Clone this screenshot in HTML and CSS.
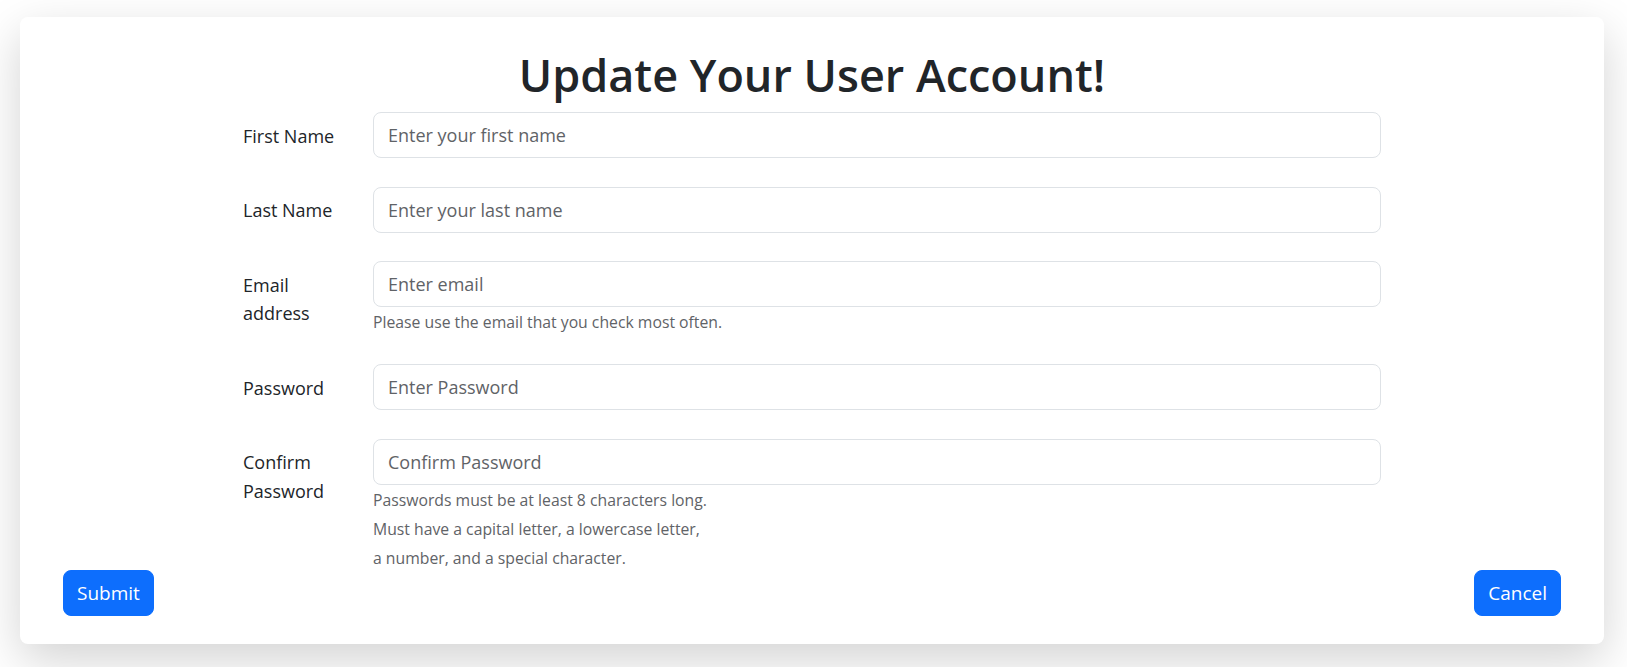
FILE: index.html
```html
<!DOCTYPE html>
<html lang="en">
<head>
<meta charset="utf-8">
<title>Update Your User Account!</title>
<link rel="stylesheet" href="styles.css">
</head>
<body>
<div class="page">
  <div class="card">
    <h1 class="title">Update Your User Account!</h1>
    <form class="form">
      <div class="row">
        <label class="label" for="first">First Name</label>
        <div class="field">
          <input class="input" id="first" type="text" placeholder="Enter your first name">
        </div>
      </div>
      <div class="row">
        <label class="label" for="last">Last Name</label>
        <div class="field">
          <input class="input" id="last" type="text" placeholder="Enter your last name">
        </div>
      </div>
      <div class="row row-help">
        <label class="label" for="email">Email address</label>
        <div class="field">
          <input class="input" id="email" type="email" placeholder="Enter email">
          <div class="help">Please use the email that you check most often.</div>
        </div>
      </div>
      <div class="row">
        <label class="label" for="pw">Password</label>
        <div class="field">
          <input class="input" id="pw" type="password" placeholder="Enter Password">
        </div>
      </div>
      <div class="row row-last">
        <label class="label" for="pw2">Confirm Password</label>
        <div class="field">
          <input class="input" id="pw2" type="password" placeholder="Confirm Password">
          <div class="help">Passwords must be at least 8 characters long.<br>Must have a capital letter, a lowercase letter,<br>a number, and a special character.</div>
        </div>
      </div>
    </form>
    <div class="actions">
      <button class="btn" type="button">Submit</button>
      <button class="btn" type="button">Cancel</button>
    </div>
  </div>
</div>
</body>
</html>
```
FILE: styles.css
```css
* { box-sizing: border-box; }
html, body { margin: 0; background: #fff; }
body {
  font-family: "Open Sans", "Noto Sans", "Liberation Sans", sans-serif;
  color: #212529;
  font-size: 18px;
}
.page {
  padding: 17px 23px 23px 20px;
}
.card {
  background: #fff;
  border-radius: 8px;
  box-shadow: 0 16px 48px rgba(0, 0, 0, 0.175);
  padding: 31px 43px 28px;
}
.title {
  margin: 0 0 10px;
  text-align: center;
  font-size: 45px;
  font-weight: 600;
  line-height: 54px;
  color: #212529;
}
.form {
  width: 1138px;
  margin: 0 auto;
}
.row {
  display: flex;
  gap: 24px;
  margin-bottom: 28.5px;
}
.row-help { margin-bottom: 27px; }
.row-last { margin-bottom: 0; }
.label {
  flex: 0 0 106px;
  padding-top: 9.5px;
  line-height: 28.5px;
  font-size: 18px;
}
.field {
  flex: 1 1 auto;
  min-width: 0;
}
.input {
  display: block;
  width: 100%;
  height: 46px;
  padding: 0 14px;
  border: 1px solid #dee2e6;
  border-radius: 8px;
  font-family: inherit;
  font-size: 18px;
  color: #212529;
  background: #fff;
  outline: none;
}
.input::placeholder { color: #5f6367; opacity: 1; }
.help {
  margin-top: 1px;
  font-size: 15.75px;
  line-height: 29px;
  color: #5f6367;
}
.actions {
  display: flex;
  justify-content: space-between;
  margin-top: -2.5px;
}
.btn {
  height: 46px;
  padding: 0 13px;
  border: 1px solid #0d6efd;
  border-radius: 8px;
  background: #0d6efd;
  color: #fff;
  font-family: inherit;
  font-size: 19px;
  line-height: 28px;
  cursor: pointer;
}
```
